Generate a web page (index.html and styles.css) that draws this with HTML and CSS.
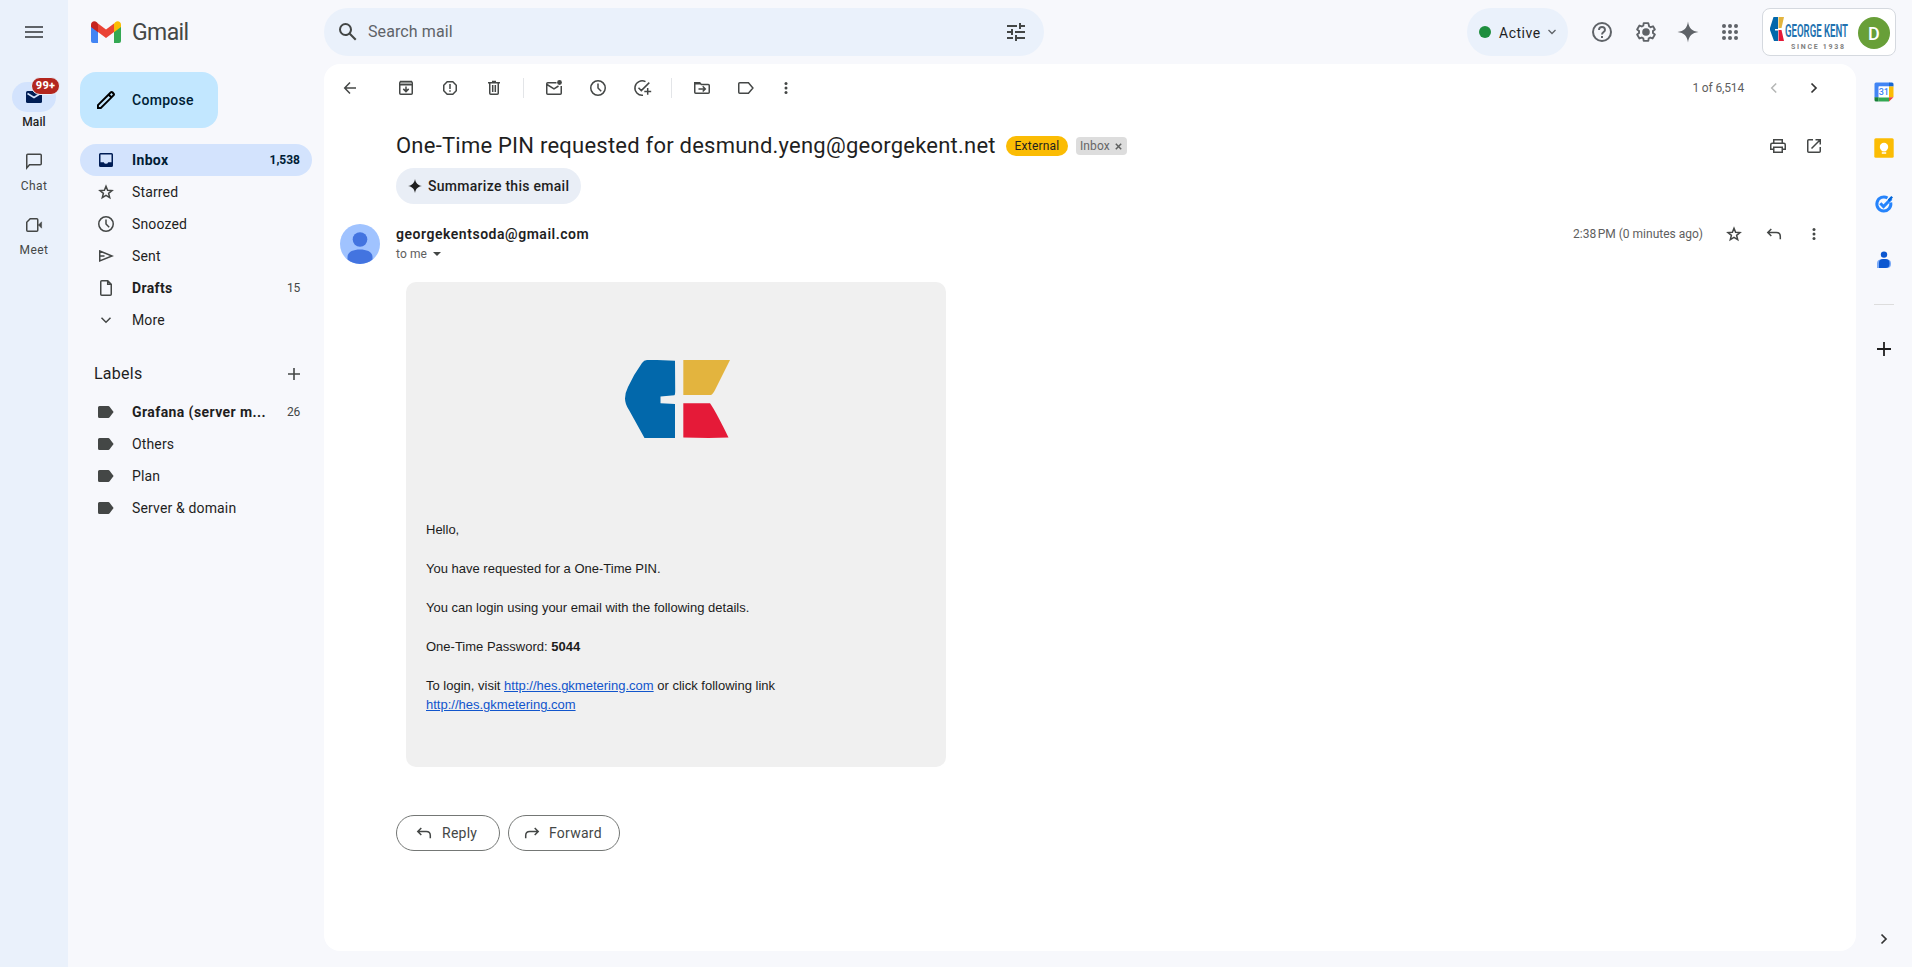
FILE: index.html
```html
<!DOCTYPE html>
<html lang="en">
<head>
<meta charset="utf-8">
<title>Gmail</title>
<link rel="stylesheet" href="styles.css">
</head>
<body>
<div class="app">
  <nav class="rail">
    <svg class="menu" width="24" height="24" viewBox="0 0 24 24"><path d="M3 18h18v-2H3zM3 13h18v-2H3zM3 8h18V6H3z"/></svg>
    <div class="rail-item on">
      <div class="pill"><svg width="20" height="20" viewBox="0 0 20 20"><path d="M3.500 4h13a1.500 1.500 0 0 1 1.500 1.500v9a1.500 1.500 0 0 1-1.500 1.500h-13A1.500 1.500 0 0 1 2 14.500v-9A1.500 1.500 0 0 1 3.500 4z"/><path d="M3.500 6.500 10 10.500l6.500-4" fill="none" stroke="#d3e3fd" stroke-width="1.500"/></svg><span class="badge">99+</span></div>
      <span>Mail</span>
    </div>
    <div class="rail-item">
      <div class="pill"><svg class="s" width="20" height="20" viewBox="0 0 20 20"><path d="M2.750 17V4.250q0-1 1-1h12.500q1 0 1 1v8.500q0 1-1 1H5.500z"/></svg></div>
      <span>Chat</span>
    </div>
    <div class="rail-item">
      <div class="pill"><svg class="s" width="20" height="20" viewBox="0 0 20 20"><path d="M6.200 3.750h6.550q1 0 1 1v10.500q0 1-1 1h-9q-1 0-1-1V7.200z"/><path d="M14 10.500 17.600 6.800v6.400L14 9.500z" fill="#444746" stroke-width=".5"/></svg></div>
      <span>Meet</span>
    </div>
  </nav>

  <div class="shell">
    <header class="top">
      <div class="brand">
        <svg width="30" height="22" viewBox="0 0 30 22"><path d="M0 4v16a2 2 0 0 0 2 2h5V9z" fill="#4285f4"/><path d="M30 4v16a2 2 0 0 1-2 2h-5V9z" fill="#34a853"/><path d="M7 2.500 15 8.500l8-6v8.500l-8 6-8-6z" fill="#ea4335"/><path d="M23 2.500 24.200 1.300C26.500-.9 30 .6 30 3.500v2.600L23 11.300z" fill="#fbbc04"/><path d="M7 2.500 5.800 1.300C3.500-.9 0 .6 0 3.500v2.600l7 5.200z" fill="#c5221f"/></svg>
        <span>Gmail</span>
      </div>
      <div class="search">
        <svg width="24" height="24" viewBox="0 0 24 24"><path d="M20.490 19l-5.730-5.730C15.530 12.200 16 10.910 16 9.500A6.500 6.500 0 1 0 9.500 16c1.410 0 2.700-.47 3.770-1.240L19 20.490 20.490 19zM5 9.500C5 7.010 7.010 5 9.500 5S14 7.010 14 9.500 11.990 14 9.500 14 5 11.990 5 9.500z"/></svg>
        <span class="query">Search mail</span>
        <svg width="24" height="24" viewBox="0 0 24 24"><path d="M3 17v2h6v-2H3zM3 5v2h10V5H3zm10 16v-2h8v-2h-8v-2h-2v6h2zM7 9v2H3v2h4v2h2V9H7zm14 4v-2H11v2h10zm-6-4h2V7h4V5h-4V3h-2v6z"/></svg>
      </div>
      <div class="status"><i></i><span>Active</span><svg width="10" height="10" viewBox="0 0 10 10"><path d="M1.500 3 5 6.500 8.500 3" fill="none" stroke="#5f6368" stroke-width="1.300"/></svg></div>
      <svg class="hi help" width="24" height="24" viewBox="0 0 24 24"><circle cx="12" cy="12" r="9" fill="none" stroke="#5f6368" stroke-width="2"/><path d="M9 10a3 3 0 0 1 6 0c0 2-3 2.200-3 4.600" fill="none" stroke="#5f6368" stroke-width="1.900"/><path d="M11 16h2v2h-2z"/></svg>
      <svg class="hi gear" width="24" height="24" viewBox="0 0 24 24"><path transform="translate(12 12) scale(.93) translate(-12 -12)" fill="none" stroke="#5f6368" stroke-width="2" stroke-linejoin="round" d="M19.430 12.980c.04-.32.07-.64.07-.98 0-.34-.03-.66-.07-.98l2.110-1.650-2-3.500-2.490 1c-.52-.4-1.080-.73-1.690-.98L14.500 2.500h-5l-.37 2.570c-.61.25-1.170.59-1.690.98l-2.490-1-2.490 4.320 2.110 1.650c-.04.32-.07.65-.07.98 0 .33.03.66.07.98l-2.110 1.650 2.490 4.320 2.490-1c.52.4 1.080.73 1.690.98l.37 2.570h5l.38-2.570c.61-.25 1.170-.59 1.690-.98l2.490 1 2.490-4.320z"/><circle cx="12" cy="12" r="3.800"/></svg>
      <svg class="hi gem" width="22" height="22" viewBox="0 0 22 22"><path d="M11 .5C11.800 7 15 10.200 21.500 11 15 11.800 11.800 15 11 21.500 10.200 15 7 11.800.5 11 7 10.200 10.200 7 11 .5z"/></svg>
      <svg class="hi apps" width="16" height="16" viewBox="0 0 16 16"><circle cx="2" cy="2" r="2"/><circle cx="8" cy="2" r="2"/><circle cx="14" cy="2" r="2"/><circle cx="2" cy="8" r="2"/><circle cx="8" cy="8" r="2"/><circle cx="14" cy="8" r="2"/><circle cx="2" cy="14" r="2"/><circle cx="8" cy="14" r="2"/><circle cx="14" cy="14" r="2"/></svg>
      <div class="account">
        <svg class="corp" width="80" height="36" viewBox="0 0 80 36"><path d="M3.500 3H8v12H5v1.500h3V27H4L0 16V14z" fill="#0268ab"/><path d="M8.500 3H14L11.500 14h-3z" fill="#e3b43e"/><path d="M8.500 16h3L14 27H8.500z" fill="#e51937"/><text class="gk" transform="translate(15 22.500) scale(1 1.900)" x="0" y="0" textLength="63" lengthAdjust="spacingAndGlyphs">GEORGE KENT</text><text x="21" y="34.500" class="gs">SINCE 1938</text></svg>
        <span class="me">D</span>
      </div>
    </header>

    <div class="body">
      <aside class="side">
        <div class="compose"><svg width="24" height="24" viewBox="0 0 24 24"><path fill="#000" d="M20.410 4.940l-1.350-1.350c-.78-.78-2.050-.78-2.830 0L3 16.820V21h4.180L20.410 7.770c.79-.78.79-2.050 0-2.830zM6.400 19.100H4.900v-1.500L14.600 7.900l1.500 1.500zM17.500 8 16 6.500l1.500-1.400 1.400 1.500z"/></svg><span>Compose</span></div>
        <div class="row sel"><svg width="20" height="20" viewBox="0 0 20 20"><path fill="#001d55" fill-rule="evenodd" d="M4.500 3h11A1.500 1.500 0 0 1 17 4.500v11a1.500 1.500 0 0 1-1.500 1.500h-11A1.500 1.500 0 0 1 3 15.500v-11A1.500 1.500 0 0 1 4.500 3zm0 1.500v7.700h3.300a2.300 2.300 0 0 0 4.400 0h3.300V4.500z"/></svg><b>Inbox</b><em>1,538</em></div>
        <div class="row"><svg class="s" width="20" height="20" viewBox="0 0 20 20"><path d="M10 4.200 11.600 8.300 16 8.600 12.600 11.400 13.700 15.700 10 13.300 6.300 15.700 7.400 11.400 4 8.600 8.400 8.300z"/></svg><span>Starred</span></div>
        <div class="row"><svg class="s" width="20" height="20" viewBox="0 0 20 20"><circle cx="10" cy="10" r="7.250"/><path d="M10 5.500V10l3.200 3.200"/></svg><span>Snoozed</span></div>
        <div class="row"><svg class="s" width="20" height="20" viewBox="0 0 20 20"><path d="M3.750 5 16 10 3.750 15zM4 10h4.500"/></svg><span>Sent</span></div>
        <div class="row"><svg class="s" width="20" height="20" viewBox="0 0 20 20"><path d="M5.750 2.750h6l3.500 3.500v10q0 1-1 1h-8.500q-1 0-1-1V3.750q0-1 1-1zM11.700 3v3.300h3.500"/></svg><b>Drafts</b><em>15</em></div>
        <div class="row"><svg class="s" width="20" height="20" viewBox="0 0 20 20"><path d="M5.500 7.800 10 12.200l4.500-4.400"/></svg><span>More</span></div>
        <div class="labels"><span>Labels</span><svg width="12" height="12" viewBox="0 0 12 12"><path d="M5.200 0h1.600v12H5.200zM0 5.200h12v1.600H0z"/></svg></div>
        <div class="row"><svg width="20" height="20" viewBox="0 0 20 20"><path d="M3.500 4h8.800q.8 0 1.300.7L17.600 10l-4 5.300q-.5.700-1.300.7H3.500Q2 16 2 14.500v-9Q2 4 3.500 4z"/></svg><b class="graf">Grafana (server m...</b><em>26</em></div>
        <div class="row"><svg width="20" height="20" viewBox="0 0 20 20"><path d="M3.500 4h8.800q.8 0 1.300.7L17.600 10l-4 5.300q-.5.700-1.300.7H3.500Q2 16 2 14.500v-9Q2 4 3.500 4z"/></svg><span>Others</span></div>
        <div class="row"><svg width="20" height="20" viewBox="0 0 20 20"><path d="M3.500 4h8.800q.8 0 1.300.7L17.600 10l-4 5.300q-.5.700-1.300.7H3.500Q2 16 2 14.500v-9Q2 4 3.500 4z"/></svg><span>Plan</span></div>
        <div class="row"><svg width="20" height="20" viewBox="0 0 20 20"><path d="M3.500 4h8.800q.8 0 1.300.7L17.600 10l-4 5.300q-.5.700-1.300.7H3.500Q2 16 2 14.500v-9Q2 4 3.500 4z"/></svg><span>Server &amp; domain</span></div>
      </aside>

      <main class="panel">
        <div class="tools">
          <span class="t back"><svg class="s" width="20" height="20" viewBox="0 0 20 20"><path d="M16 10H5M10 4.500 4.700 10l5.300 5.500"/></svg></span>
          <span class="t"><svg class="s" width="20" height="20" viewBox="0 0 20 20"><path d="M4.500 3.500h11v3h-11z" fill="#aaacab" stroke="none"/><path d="M4.500 3.500h11L16.250 5v10.250q0 1-1 1H4.750q-1 0-1-1V5zM4 6.750h12M10 8.500v4.800M7.300 10.900l2.700 2.700 2.700-2.700"/></svg></span>
          <span class="t"><svg class="s" width="20" height="20" viewBox="0 0 20 20"><path d="M7.200 3.750h5.600l3.450 3.450v5.600l-3.450 3.450H7.200L3.750 12.800V7.200zM10 6v5M10 12.300v1.500"/></svg></span>
          <span class="t"><svg class="s" width="20" height="20" viewBox="0 0 20 20"><path d="M4 4.750h12M8 3.600h4M5.750 5v10.250q0 1 1 1h6.500q1 0 1-1V5M8.700 7v7M11.300 7v7"/></svg></span>
          <i class="bar"></i>
          <span class="t"><svg class="s" width="20" height="20" viewBox="0 0 20 20"><path d="M12.500 4.750H3.750q-1 0-1 1v9.500q0 1 1 1h12.500q1 0 1-1V8M3 6.500l7 4.300 4.500-2.800"/><circle cx="15.500" cy="4.500" r="2.400" fill="#444746" stroke="none"/></svg></span>
          <span class="t"><svg class="s" width="20" height="20" viewBox="0 0 20 20"><circle cx="10" cy="10" r="7.250"/><path d="M10 5.500V10l3.200 3.200"/></svg></span>
          <span class="t"><svg class="s" width="20" height="20" viewBox="0 0 20 20"><path d="M13.500 3.700A7.200 7.200 0 1 0 11 17.200M6.500 9.800l2.800 2.800 8-8M15.700 10v6.800M12.300 13.400h6.900"/></svg></span>
          <i class="bar"></i>
          <span class="t"><svg class="s" width="20" height="20" viewBox="0 0 20 20"><path d="M2.750 4.750h5l1.500 1.750h7q1 0 1 1v6.750q0 1-1 1H3.750q-1 0-1-1zM3 5.700h5M6.500 10.900h6.500M10.700 8.300l2.600 2.600-2.600 2.600"/></svg></span>
          <span class="t"><svg class="s" width="20" height="20" viewBox="0 0 20 20"><path d="M3.750 4.750h8.700L16.900 10l-4.450 5.250h-8.700q-1 0-1-1v-8.500q0-1 1-1z"/></svg></span>
          <span class="t more"><svg width="20" height="20" viewBox="0 0 20 20"><circle cx="10" cy="5.500" r="1.500"/><circle cx="10" cy="10" r="1.500"/><circle cx="10" cy="14.500" r="1.500"/></svg></span>
          <span class="pager">1 of 6,514</span>
          <span class="t nav"><svg class="s dim" width="20" height="20" viewBox="0 0 20 20"><path d="M12.200 5.500 7.700 10l4.500 4.500"/></svg></span>
          <span class="t nav"><svg class="s nx" width="20" height="20" viewBox="0 0 20 20"><path d="M7.500 5.500 12 10l-4.500 4.500"/></svg></span>
        </div>

        <div class="subject">
          <h1>One-Time PIN requested for desmund.yeng@georgekent.net</h1>
          <span class="ext">External</span>
          <span class="chip">Inbox<svg width="7" height="7" viewBox="0 0 7 7"><path d="M.8.8l5.400 5.400M6.200.8.800 6.200" stroke="#5f6160" stroke-width="1.500"/></svg></span>
          <svg class="s print" width="20" height="20" viewBox="0 0 20 20"><path d="M5.750 7V3.750h8.500V7M5.750 13.250h-3v-4.500q0-1.500 1.500-1.500h11.500q1.500 0 1.500 1.500v4.500h-3M5.750 11.250h8.500v5h-8.500z"/></svg>
          <svg class="s" width="20" height="20" viewBox="0 0 20 20"><path d="M9 3.750H4.750q-1 0-1 1v10.500q0 1 1 1h10.500q1 0 1-1V11M11.500 3.750h4.750V8.500M16 4 7.500 12.500"/></svg>
        </div>
        <div class="sum"><svg width="14" height="14" viewBox="0 0 14 14"><path d="M7 0C7.700 4.200 9.800 6.300 14 7 9.800 7.700 7.700 9.800 7 14 6.300 9.800 4.200 7.700 0 7 4.200 6.300 6.300 4.200 7 0z" fill="#1f1f1f"/></svg><span>Summarize this email</span></div>

        <div class="sender">
          <svg class="face" width="40" height="40" viewBox="0 0 40 40"><circle cx="20" cy="20" r="20" fill="#a0c3ff"/><circle cx="20" cy="15.500" r="7.300" fill="#4374e0"/><path d="M7.500 35.600V33c0-5 5.500-7.500 12.500-7.500S32.500 28 32.500 33v2.600A20 20 0 0 1 20 40a20 20 0 0 1-12.500-4.400z" fill="#4374e0"/></svg>
          <div class="who"><b>georgekentsoda@gmail.com</b><span>to me<i></i></span></div>
          <span class="date">2:38&#8239;PM (0 minutes ago)</span>
          <svg class="s" width="20" height="20" viewBox="0 0 20 20"><path d="M10 4.200 11.600 8.300 16 8.600 12.600 11.400 13.700 15.700 10 13.300 6.300 15.700 7.400 11.400 4 8.600 8.400 8.300z"/></svg>
          <svg class="s" width="20" height="20" viewBox="0 0 20 20"><path d="M7.300 5 3.800 8.500l3.500 3.500M4 8.500h8.300q4 0 4 4v2.700"/></svg>
          <svg width="20" height="20" viewBox="0 0 20 20"><circle cx="10" cy="5.500" r="1.500"/><circle cx="10" cy="10" r="1.500"/><circle cx="10" cy="14.500" r="1.500"/></svg>
        </div>

        <article class="mail">
          <svg class="logo" width="106" height="78" viewBox="0 0 106 78"><path d="M22 0h10l18 .8.2 30q0 4-.8 4.500L35.500 36.500v6.800L50 44v34H19.500L4 50Q0 44 0 38.500T3 27Q9 14 17 3 19 0 22 0z" fill="#0268ab"/><path d="M58.300 0H105L90 30q-2.500 4.800-4 4.900H58.300z" fill="#e3b43e"/><path d="M58.300 43.300H85Q90 50 103.500 77.500l-20 .5-25.200-.4z" fill="#e51a38"/></svg>
          <p>Hello,</p>
          <p>You have requested for a One-Time PIN.</p>
          <p>You can login using your email with the following details.</p>
          <p>One-Time Password: <b>5044</b></p>
          <p class="visit">To login, visit <a>http://hes.gkmetering.com</a> or click following link<br><a>http://hes.gkmetering.com</a></p>
        </article>

        <div class="acts">
          <span class="btn reply"><svg class="s" width="20" height="20" viewBox="0 0 20 20"><path d="M7.300 5 3.800 8.500l3.500 3.500M4 8.500h8.300q4 0 4 4v2.700"/></svg>Reply</span>
          <span class="btn fwd"><svg class="s" width="20" height="20" viewBox="0 0 20 20"><path d="M12.700 5l3.500 3.500-3.500 3.500M16 8.500H7.700q-4 0-4 4v2.700"/></svg>Forward</span>
        </div>
      </main>

      <aside class="addons">
        <svg width="20" height="20" viewBox="0 0 20 20"><path d="M2 .5h13.500v4H5v11H.5V2A1.500 1.500 0 0 1 2 .5z" fill="#4285f4"/><path d="M15 .5h3A1.500 1.500 0 0 1 19.500 2v2.500H15z" fill="#1967d2"/><path d="M15 4.500h4.500V15H15z" fill="#fbbc04"/><path d="M4.500 15.300H15v4.200H4.500z" fill="#34a853"/><path d="M.5 15.300h4v4.200H2A1.500 1.500 0 0 1 .5 18z" fill="#188038"/><path d="M15 15.300h4.500L15 19.500z" fill="#ea4335"/><path d="M4.500 4.500H15v10.800H4.500z" fill="#fff"/><text x="9.800" y="13" text-anchor="middle" class="cal">31</text></svg>
        <svg width="20" height="20" viewBox="0 0 20 20"><rect x=".3" y=".3" width="19.400" height="19.400" rx="1.500" fill="#fbbc04"/><circle cx="10" cy="9" r="4.200" fill="#fff"/><path d="M7.800 11h4.400v2.300H7.800zM7.800 14.200h4.400v1.500H7.800z" fill="#fff"/></svg>
        <svg width="20" height="20" viewBox="0 0 20 20"><path d="M16.700 8.500A7 7 0 1 1 13.500 4" fill="none" stroke="#2684fc" stroke-width="3"/><path d="M6.300 9.300l3.200 3.200 7.800-7.900" fill="none" stroke="#2684fc" stroke-width="3"/><path d="M13.800 5.600 17.300 2 19 3.600l-3.800 4z" fill="#0066da"/></svg>
        <svg width="20" height="20" viewBox="0 0 20 20"><circle cx="10" cy="4.600" r="3.200" fill="#0b57d0"/><rect x="3" y="9.500" width="14" height="8.500" rx="4" fill="#7baaf7"/><path d="M3 13h3v5H3z" fill="#7baaf7"/><path d="M5 18v-5q0-4 4-4h2.500q4 0 4 4v1q0 4-4 4z" fill="#0b57d0"/></svg>
        <i></i>
        <svg class="plus" width="14" height="14" viewBox="0 0 14 14"><path d="M6.100 0h1.800v14H6.100zM0 6.100h14v1.800H0z" fill="#1f1f1f"/></svg>
        <svg class="s nx last" width="20" height="20" viewBox="0 0 20 20"><path d="M7.500 5.500 12 10l-4.500 4.500"/></svg>
      </aside>
    </div>
  </div>
</div>
</body>
</html>
```
FILE: styles.css
```css
* { box-sizing: border-box; }
body { margin: 0; background: #f7f8fc; color: #1f1f1f; font: 14px/20px Roboto, "Open Sans", sans-serif; }
svg { display: block; flex: none; fill: #444746; }
.s { fill: none; stroke: #444746; stroke-width: 1.5; }
.app { display: flex; height: 967px; overflow: hidden; }

.rail { width: 68px; background: #eaf1fb; display: flex; flex-direction: column; align-items: center; padding-top: 20px; }
.menu { fill: #5f6368; margin-bottom: 38px; }
.rail-item { height: 64px; width: 68px; display: flex; flex-direction: column; align-items: center; font-size: 12px; line-height: 20px; letter-spacing: .45px; color: #444746; }
.rail-item.on { font-weight: 500; color: #1f1f1f; letter-spacing: .1px; }
.pill { position: relative; width: 44px; height: 30px; border-radius: 15px; display: grid; place-items: center; }
.on .pill { background: #d3e3fd; }
.on svg { fill: #001d55; }
.badge { position: absolute; left: 19px; top: -5px; width: 29px; height: 18px; border: 1px solid #eaf1fb; border-radius: 9px; background: #b3261e; color: #fff; font-size: 11px; font-weight: 800; line-height: 16px; text-align: center; letter-spacing: .3px; }

.shell { flex: 1; display: flex; flex-direction: column; }
.top { height: 64px; display: flex; align-items: center; }
.brand { width: 256px; padding-left: 23px; display: flex; align-items: center; gap: 11px; font-size: 23px; color: #444746; line-height: 26px; letter-spacing: -.6px; }
.brand span { padding-top: 2px; }
.search { width: 720px; height: 48px; border-radius: 24px; background: #eaf1fb; display: flex; align-items: center; padding: 0 16px 0 12px; font-size: 16px; color: #5f6368; }
.search .query { flex: 1; margin-left: 8px; letter-spacing: .1px; }
.status { width: 101px; height: 48px; margin-left: 423px; border-radius: 24px; background: #eaf1fb; display: flex; align-items: center; padding-left: 12px; font-weight: 450; }
.status i { width: 12px; height: 12px; border-radius: 50%; background: #1e8e3e; margin-right: 8px; }
.status span { width: 48px; letter-spacing: .5px; padding-top: 2px; }
.hi { fill: #5f6368; }
.help { margin-left: 22px; }
.gear { margin-left: 20px; }
.gem { margin-left: 19px; }
.apps { margin-left: 23px; }
.account { width: 134px; height: 48px; margin-left: 24px; border: 1px solid #d5d9df; border-radius: 8px; background: #fff; display: flex; align-items: center; padding-left: 7px; }
.gk { font: 600 10px Roboto, sans-serif; fill: #2272b0; }
.gs { font: 700 7px Roboto, sans-serif; letter-spacing: 1.7px; fill: #808080; }
.me { width: 32px; height: 32px; margin: 2px 0 0 8px; border-radius: 50%; background: #689f38; color: #fff; font-size: 18px; font-weight: 500; line-height: 33px; text-align: center; }

.body { flex: 1; display: flex; }
.side { width: 256px; padding: 8px 12px 0; }
.compose { width: 138px; height: 56px; border-radius: 16px; background: #c2e7ff; display: flex; align-items: center; gap: 14px; padding-left: 14px; margin-bottom: 16px; font-weight: 500; color: #001d35; letter-spacing: .3px; }
.row { width: 232px; height: 32px; border-radius: 16px; display: flex; align-items: center; padding: 0 12px 0 16px; letter-spacing: .15px; }
.row svg { margin-right: 16px; }
.row b { font-weight: 700; letter-spacing: .35px; }
.row .graf { letter-spacing: .42px; }
.row em { margin-left: auto; font-style: normal; font-size: 12px; color: #444746; letter-spacing: -.2px; }
.sel { background: #d3e3fd; color: #001d35; }
.row.sel em { font-weight: 700; color: #001d35; letter-spacing: 0; }
.labels { height: 52px; margin-top: 8px; display: flex; align-items: center; justify-content: space-between; padding: 0 12px 0 14px; font-size: 16px; letter-spacing: .25px; margin-bottom: 0; padding-bottom: 0; }
.labels span, .labels svg { margin-top: 8px; }

.panel { width: 1532px; height: 887px; border-radius: 16px; background: #fff; }
.tools { height: 48px; display: flex; align-items: center; padding: 0 22px 0 4px; }
.t { width: 44px; display: flex; justify-content: center; }
.back { margin-right: 12px; }
.more { width: 36px; }
.nav { width: 40px; }
.bar { width: 1px; height: 20px; background: #e3e5e8; margin: 0 8px 0 7px; }
.pager { margin-left: auto; margin-right: 10px; font-size: 12px; color: #5e5e5e; letter-spacing: -.15px; }
.s.dim { stroke: #b4b6b5; }
.s.nx { stroke-width: 1.7; stroke: #333; }
.subject { height: 50px; margin-top: 8px; display: flex; align-items: center; padding: 2px 32px 0 72px; }
.subject h1 { margin: 0; width: 610px; font-size: 22px; font-weight: 400; line-height: 28px; letter-spacing: .23px; white-space: nowrap; }
.ext { width: 62px; height: 20px; border-radius: 10px; background: #fbbc04; font-size: 12px; font-weight: 450; text-align: center; letter-spacing: .2px; }
.chip { width: 51px; height: 18px; margin-left: 8px; border-radius: 4px; background: #ddd; color: #666; font-size: 12px; line-height: 18px; display: flex; align-items: center; padding-left: 4px; gap: 5px; letter-spacing: .1px; }
.print { margin-left: auto; margin-right: 16px; }
.sum { width: 185px; height: 36px; margin: -2px 0 0 72px; border-radius: 18px; background: #e9eef6; display: flex; align-items: center; gap: 6px; padding-left: 12px; font-weight: 500; letter-spacing: .28px; white-space: nowrap; }
.sender { height: 60px; margin-top: 20px; padding: 0 32px 0 16px; display: flex; align-items: flex-start; }
.sender > svg + svg { margin-left: 20px; }
.sender .date + svg { margin-left: 21px; }
.who { margin-left: 16px; display: flex; flex-direction: column; font-size: 14px; letter-spacing: .53px; }
.who b { font-weight: 600; }
.who span { display: flex; align-items: center; font-size: 12px; color: #5e5e5e; gap: 5px; letter-spacing: .1px; }
.who i { margin-left: 1px; border: 4px solid transparent; border-top-color: #444746; border-bottom: 0; }
.date { margin-left: auto; font-size: 12px; color: #5e5e5e; }
.mail { width: 540px; height: 485px; margin: -2px 0 0 82px; border-radius: 10px; background: #f0f0f0; padding: 78px 20px 0; font: 13px/19.5px "Liberation Sans", Arial, sans-serif; color: #1c1c1c; }
.logo { margin: 0 0 82px 199px; }
.mail p { margin: 0 0 19.5px; }
.mail .visit { line-height: 19px; }
.mail a { color: #15c; text-decoration: underline; }
.acts { display: flex; gap: 8px; margin: 48px 0 0 72px; }
.btn { height: 36px; border: 1px solid #747775; border-radius: 18px; display: flex; align-items: center; gap: 8px; padding-left: 17px; font-weight: 450; color: #444746; letter-spacing: .25px; }
.reply { width: 104px; }
.fwd { width: 112px; padding-left: 13px; gap: 7px; }

.addons { width: 56px; display: flex; flex-direction: column; align-items: center; padding: 18px 0 18px; gap: 36px; }
.cal { font: 500 9px Roboto, sans-serif; fill: #4285f4; }
.addons i { width: 20px; height: 1px; background: #ddd; margin-top: -2px; }
.plus { margin-top: 1px; }
.last { margin-top: auto; }
```
